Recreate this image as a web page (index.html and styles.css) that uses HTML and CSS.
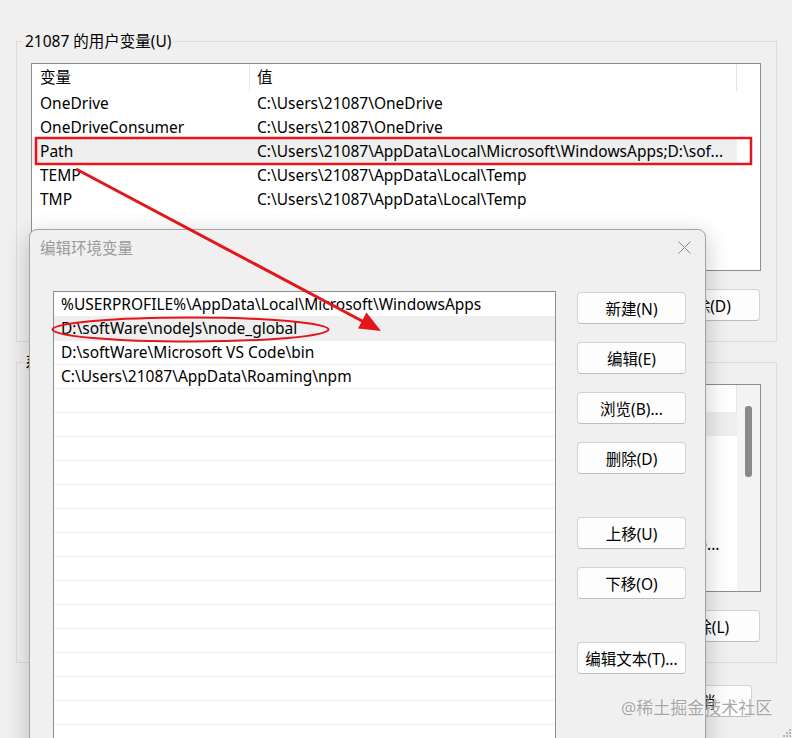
FILE: index.html
```html
<!DOCTYPE html>
<html>
<head>
  <meta charset="UTF-8">
  <title>环境变量</title>
  <link rel="stylesheet" href="styles.css">
</head>
<body>
    <div class="window">

        <div class="group">
            <div class="group-title">21087 的用户变量(U)</div>
            <div class="listview">
                <div class="lv-body">
                    <div class="lv-head">
                        <div>变量</div>
                        <div>值</div>
                    </div>
                    <div class="lv-row"><div>OneDrive</div><div>C:\Users\21087\OneDrive</div></div>
                    <div class="lv-row"><div>OneDriveConsumer</div><div>C:\Users\21087\OneDrive</div></div>
                    <div class="lv-row sel"><div>Path</div><div>C:\Users\21087\AppData\Local\Microsoft\WindowsApps;D:\sof...</div></div>
                    <div class="lv-row"><div>TEMP</div><div>C:\Users\21087\AppData\Local\Temp</div></div>
                    <div class="lv-row"><div>TMP</div><div>C:\Users\21087\AppData\Local\Temp</div></div>
                </div>
            </div>
            <div class="btn-row">
                <button class="btn">新建(N)...</button>
                <button class="btn">编辑(E)...</button>
                <button class="btn">删除(D)</button>
            </div>
        </div>

        <div class="group">
            <div class="group-title">系统变量(S)</div>
            <div class="listview">
                <div class="lv-body">
                    <div class="lv-head">
                        <div>变量</div>
                        <div>值</div>
                    </div>
                    <div class="lv-row sel"><div>ComSpec</div><div>C:\WINDOWS\system32\cmd.exe</div></div>
                    <div class="lv-row"><div>DriverData</div><div>C:\Windows\System32\Drivers\DriverData</div></div>
                    <div class="lv-row"><div>NUMBER_OF_PROCESSORS</div><div>16</div></div>
                    <div class="lv-row"><div>OS</div><div>Windows_NT</div></div>
                    <div class="lv-row"><div>PATHEXT</div><div>.COM;.EXE;.BAT;.CMD;.VBS;.VBE;.JS;.JSE;.WSF;.WSH;.MSC</div></div>
                    <div class="lv-row"><div>Path</div><div>C:\Users\21087\AppData\Local\Microsoft\WindowsApps;D:\pe...</div></div>
                    <div class="lv-row"><div>PROCESSOR_ARCHITECTURE</div><div>AMD64</div></div>
                </div>
                <div class="lv-scroll"><div class="thumb"></div></div>
            </div>
            <div class="btn-row">
                <button class="btn">新建(W)...</button>
                <button class="btn">编辑(I)...</button>
                <button class="btn">删除(L)</button>
            </div>
        </div>

        <div class="btn-row bottom">
            <button class="btn small">确定</button>
            <button class="btn small">取消</button>
        </div>
    </div>

    <div class="dialog">
        <div class="dlg-titlebar">
            <span class="dlg-title">编辑环境变量</span>
            <svg class="dlg-close" width="13" height="13" viewBox="0 0 13 13">
                <path d="M0.5 0.5 L12.5 12.5 M12.5 0.5 L0.5 12.5" stroke="#8a8a8a" stroke-width="1" fill="none"/>
            </svg>
        </div>
        <div class="dlg-body">
            <div class="dlg-list">
                <div class="dlg-row">%USERPROFILE%\AppData\Local\Microsoft\WindowsApps</div>
                <div class="dlg-row sel">D:\softWare\nodeJs\node_global</div>
                <div class="dlg-row">D:\softWare\Microsoft VS Code\bin</div>
                <div class="dlg-row">C:\Users\21087\AppData\Roaming\npm</div>
                <div class="dlg-row"></div>
                <div class="dlg-row"></div>
                <div class="dlg-row"></div>
                <div class="dlg-row"></div>
                <div class="dlg-row"></div>
                <div class="dlg-row"></div>
                <div class="dlg-row"></div>
                <div class="dlg-row"></div>
                <div class="dlg-row"></div>
                <div class="dlg-row"></div>
                <div class="dlg-row"></div>
                <div class="dlg-row"></div>
                <div class="dlg-row"></div>
                <div class="dlg-row"></div>
                <div class="dlg-row"></div>
                <div class="dlg-row"></div>
            </div>
            <div class="dlg-buttons">
                <button class="btn">新建(N)</button>
                <button class="btn">编辑(E)</button>
                <button class="btn">浏览(B)...</button>
                <button class="btn">删除(D)</button>
                <button class="btn spaced">上移(U)</button>
                <button class="btn">下移(O)</button>
                <button class="btn spaced">编辑文本(T)...</button>
            </div>
        </div>
    </div>

    <!-- red annotations drawn on top of the screenshot -->
    <svg class="marks" width="792" height="738" viewBox="0 0 792 738">
        <rect x="36" y="138" width="715" height="26" fill="none" stroke="#e3161b" stroke-width="2.5"/>
        <ellipse cx="190.5" cy="329.5" rx="138" ry="12" fill="none" stroke="#e3161b" stroke-width="2"/>
        <line x1="76" y1="169" x2="364" y2="322" stroke="#e3161b" stroke-width="3"/>
        <polygon points="381,331 358,328.5 366.5,312.5" fill="#e3161b"/>
    </svg>

    <div class="watermark">@稀土掘金技术社区</div>

    <svg class="grip" width="10" height="10" viewBox="0 0 10 10">
        <rect x="7" y="1" width="2" height="2" fill="#b5b5b5"/>
        <rect x="4" y="4" width="2" height="2" fill="#b5b5b5"/>
        <rect x="7" y="4" width="2" height="2" fill="#b5b5b5"/>
        <rect x="1" y="7" width="2" height="2" fill="#b5b5b5"/>
        <rect x="4" y="7" width="2" height="2" fill="#b5b5b5"/>
        <rect x="7" y="7" width="2" height="2" fill="#b5b5b5"/>
    </svg>
</body>
</html>
```

FILE: styles.css
```css
* {
    box-sizing: border-box;
}

body {
    margin: 0;
    width: 792px;
    height: 738px;
    overflow: hidden;
    position: relative;
    background-color: #f0f0f0;
    font-family: "Noto Sans", "Noto Sans CJK SC", sans-serif;
    font-size: 15.5px;
    color: #000;
}

.window {
    padding: 41px 15px 0 16px;
}

.group {
    border: 1px solid #dcdcdc;
    padding: 0 15px 20px 14px;
}

.group + .group {
    margin-top: 20px;
}

.group-title {
    width: fit-content;
    height: 20px;
    line-height: 20px;
    margin: -11px 0 12px -8px;
    padding: 0 2px;
    background-color: #f0f0f0;
}

.listview {
    display: flex;
    height: 208px;
    background-color: white;
    border: 1px solid #8d8d8d;
}

.lv-body {
    width: 705px;
    flex: 0 0 705px;
    overflow: hidden;
}

.lv-head,
.lv-row {
    display: grid;
    grid-template-columns: 218px 487px;
}

.lv-head {
    height: 27px;
    line-height: 27px;
}

.lv-head div {
    border-right: 1px solid #e5e5e5;
    padding-left: 8px;
}

.lv-head div + div {
    padding-left: 7px;
}

.lv-row {
    height: 24px;
    line-height: 24px;
}

.lv-row div {
    padding-left: 8px;
    white-space: nowrap;
    overflow: hidden;
}

.lv-row div + div {
    padding-left: 7px;
    padding-right: 4px;
    text-overflow: ellipsis;
}

.lv-row.sel {
    background-color: #efefef;
}

.lv-scroll {
    flex: 1;
    background-color: #f4f4f4;
}

.thumb {
    width: 7px;
    height: 71px;
    margin: 21px auto 0;
    background-color: #8a8a8a;
    border-radius: 3px;
}

.btn-row {
    display: flex;
    justify-content: flex-end;
    gap: 10px;
    margin-top: 18px;
    margin-right: 1px;
}

.btn-row.bottom {
    margin: 22px 25px 0 0;
}

.btn {
    width: 110px;
    height: 32px;
    padding: 0;
    font: inherit;
    color: #000;
    background-color: #fdfdfd;
    border: 1px solid #d3d3d3;
    border-bottom-color: #bdbdbd;
    border-radius: 4px;
}

.btn.small {
    width: 104px;
}

/* dialog lying over the main window */
.dialog {
    position: absolute;
    left: 29px;
    top: 229px;
    width: 677px;
    height: 540px;
    background-color: #f0f0f0;
    border: 1px solid #a3a3a3;
    border-radius: 8px 8px 0 0;
    box-shadow: 0 6px 24px rgba(0, 0, 0, 0.22);
}

.dlg-titlebar {
    display: flex;
    align-items: center;
    justify-content: space-between;
    height: 34px;
    padding: 0 14px 0 10px;
}

.dlg-title {
    color: #9a9a9a;
}

.dlg-body {
    display: flex;
    gap: 21px;
    padding: 27px 0 0 23px;
}

.dlg-list {
    width: 503px;
    height: 480px;
    padding-top: 1px;
    background-color: white;
    border: 1px solid #8d8d8d;
}

.dlg-row {
    height: 24px;
    line-height: 23px;
    padding-left: 7px;
    border-bottom: 1px solid #efefef;
    white-space: nowrap;
}

.dlg-row.sel {
    background-color: #efefef;
}

.dlg-buttons {
    display: flex;
    flex-direction: column;
    gap: 18px;
    padding-top: 1px;
}

.dlg-buttons .btn {
    width: 109px;
}

.dlg-buttons .spaced {
    margin-top: 25px;
}

.marks {
    position: absolute;
    left: 0;
    top: 0;
    pointer-events: none;
}

.watermark {
    position: absolute;
    left: 621px;
    top: 696px;
    font-size: 17px;
    line-height: 24px;
    color: rgba(110, 110, 110, 0.6);
    text-shadow: 0 0 2px rgba(255, 255, 255, 0.9);
    pointer-events: none;
}

.grip {
    position: absolute;
    right: 0;
    bottom: 0;
}
```
